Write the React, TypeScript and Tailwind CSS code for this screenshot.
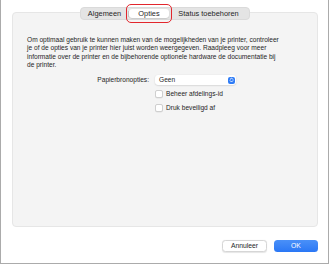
const font = { fontFamily: '"Liberation Sans", Arial, sans-serif' };

const Checkbox = ({ label }: { label: string }) => (
  <div className="flex items-center h-[10px] gap-[3px]">
    <span className="w-[8px] h-[8px] rounded-[2px] bg-white border border-[#cfcfcf] shadow-[0_0.5px_0.5px_rgba(0,0,0,0.08)]" />
    <span className="text-[6.6px] text-[#1f1f1f] leading-none">{label}</span>
  </div>
);

const Stepper = () => (
  <span className="w-[7px] h-[7px] rounded-[2px] bg-[#2f7cf6] flex items-center justify-center">
    <svg width="5" height="6" viewBox="0 0 5 6" fill="none" stroke="white" strokeWidth="0.9" strokeLinecap="round" strokeLinejoin="round">
      <path d="M1.2 2.3 L2.5 1 L3.8 2.3" />
      <path d="M1.2 3.7 L2.5 5 L3.8 3.7" />
    </svg>
  </span>
);

const App = () => {
  return (
    <div className="w-[330px] h-[265px] bg-white" style={font}>
      <div className="w-[329px] h-[264px] border-x border-b border-[#ababab] flex flex-col px-[10px]">
        {/* tabs */}
        <div className="relative z-10 flex justify-center pt-[7px] pl-[1px]">
          <div className="flex items-center h-[13px] p-[1px] bg-[#e4e4e4] rounded-[4px] border border-[#dadada] text-[7.4px] text-[#1f1f1f]">
            <div className="w-[45px] text-center">Algemeen</div>
            <div className="w-[1px] h-[6px] bg-[#c9c9c9] mx-[0.5px]" />
            <div className="relative w-[40px] h-full">
              <div className="h-full bg-white rounded-[3px] shadow-[0_0.5px_1px_rgba(0,0,0,0.2)] flex items-center justify-center">Opties</div>
              <div className="absolute -left-[3px] -right-[3px] -top-[5px] -bottom-[5px] border-[1.5px] border-[#e2262d] rounded-[5px]" />
            </div>
            <div className="w-[79px] text-center">Status toebehoren</div>
          </div>
        </div>

        {/* panel */}
        <div className="-mt-[8px] ml-[1px] w-[306px] h-[215px] bg-[#f4f4f4] border border-[#e6e6e6] rounded-[4px] pl-[14px] pt-[23px]">
          <p className="text-[6.6px] leading-[8.35px] text-[#1f1f1f]">
            Om optimaal gebruik te kunnen maken van de mogelijkheden van je printer, controleer<br />
            je of de opties van je printer hier juist worden weergegeven. Raadpleeg voor meer<br />
            informatie over de printer en de bijbehorende optionele hardware de documentatie bij<br />
            de printer.
          </p>

          <div className="mt-[6px] flex items-center h-[10px]">
            <div className="w-[122px] text-right text-[6.6px] text-[#1f1f1f] leading-none">Papierbronopties:</div>
            <div className="ml-[6px] w-[81px] h-[10px] bg-white rounded-[3px] shadow-[0_0.5px_1.5px_rgba(0,0,0,0.18)] flex items-center justify-between pl-[4px] pr-[1.5px]">
              <span className="text-[6.6px] text-[#1f1f1f] leading-none">Geen</span>
              <Stepper />
            </div>
          </div>

          <div className="ml-[128px] mt-[4px] flex flex-col gap-[3.5px]">
            <Checkbox label="Beheer afdelings-id" />
            <Checkbox label="Druk beveiligd af" />
          </div>
        </div>

        {/* buttons */}
        <div className="mt-[13px] flex justify-end gap-[7px]">
          <button className="w-[45px] h-[12px] bg-white rounded-[3.5px] border border-[#d6d6d6] shadow-[0_0.5px_1px_rgba(0,0,0,0.1)] text-[6.8px] text-[#1f1f1f] leading-none">
            Annuleer
          </button>
          <button className="w-[44px] h-[12px] rounded-[3.5px] bg-gradient-to-b from-[#4a90f8] to-[#2a77f5] text-[6.8px] text-white leading-none">
            OK
          </button>
        </div>
      </div>
    </div>
  );
};

export default App;
